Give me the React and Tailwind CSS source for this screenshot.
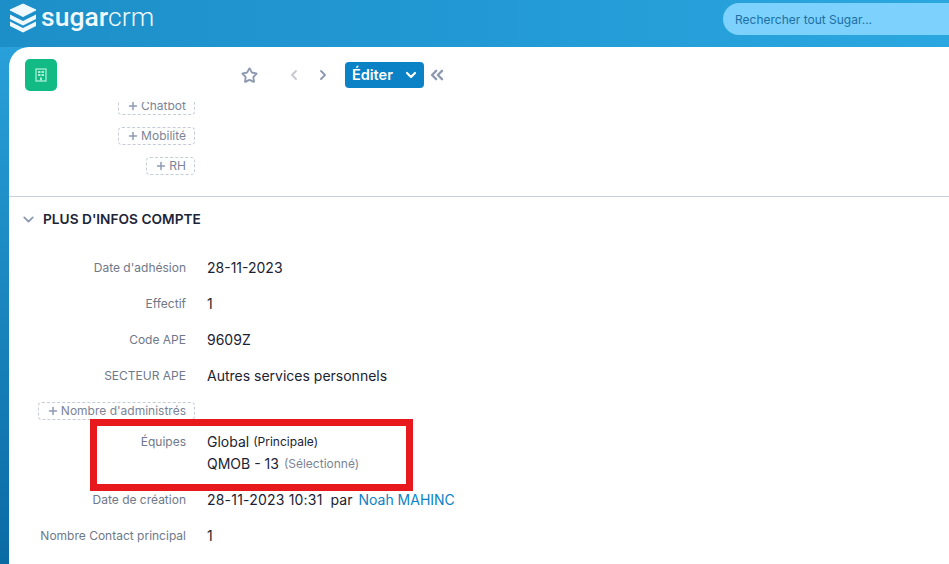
import React from "react";
import { Star, ChevronLeft, ChevronRight, ChevronDown, ChevronsLeft, Plus } from "lucide-react";

function Pill({ label, className = "" }) {
  return (
    <div className={`flex justify-end pr-[754px] ${className}`}>
      <span className="flex h-[18px] items-center gap-[2px] rounded-[4px] border border-dashed border-[#c5ccd9] pl-[8px] pr-[8px] text-[12px] leading-none text-[#7b8496]">
        <Plus size={12} strokeWidth={3} className="text-[#8f9bb3]" />
        {label}
      </span>
    </div>
  );
}

function Row({ label, children, className = "" }) {
  return (
    <div className={`flex items-center ${className}`}>
      <div className="w-[177px] shrink-0 pt-px text-right text-[12px] text-[#6f7889]">{label}</div>
      <div className="ml-[21px] text-[14px] text-[#1b2233]">{children}</div>
    </div>
  );
}

export default function App() {
  return (
    <div className="relative flex h-[564px] w-[949px] flex-col overflow-hidden bg-gradient-to-b from-[#2ba5de] to-[#0a6ba3] font-['Inter',sans-serif]">
      <header className="flex h-[47px] shrink-0 items-start justify-between bg-gradient-to-r from-[#1d8fc8] via-[#2299d4] to-[#2ba7e0]">
        <div className="ml-[9px] mt-[4px] flex items-center">
          <svg width="28" height="30" viewBox="0 0 28 30" fill="none" className="mt-[-1px]">
            <path d="M14 1 L27 7 L14 13.5 L1 7 Z" fill="#f0f9fd" stroke="#f0f9fd" strokeLinejoin="round" />
            <path d="M1 11.5 L14 18 L27 11.5 V16 L14 22.5 L1 16 Z" fill="#f0f9fd" />
            <path d="M1 18.5 L14 25 L27 18.5 V23 L14 29.5 L1 23 Z" fill="#f0f9fd" />
          </svg>
          <span className="ml-[4px] mt-[-3px] font-['Roboto',sans-serif] text-[26.5px] leading-none text-[#f0f9fd]">
            <span className="font-medium">sugar</span>
            <span className="font-light">crm</span>
          </span>
        </div>
        <div className="mt-[3px] flex h-[32px] w-[226px] items-center rounded-l-[16px] bg-[#7dd1fd] pl-[12px] pt-px text-[12px] text-[#1b6fa3]">
          Rechercher tout Sugar...
        </div>
      </header>

      <main className="ml-[9px] flex min-h-0 flex-1 flex-col rounded-tl-[20px] bg-white">
        <div className="flex h-[55px] shrink-0 items-center">
          <div className="ml-[16px] mt-px flex h-[32px] w-[32px] items-center justify-center rounded-[5px] bg-[#12bb84]">
            <svg width="12" height="14" viewBox="0 0 12 14" fill="none">
              <rect x="1" y="1" width="10" height="12" fill="#12bb84" stroke="#a8efd5" strokeWidth="1.3" />
              <rect x="3" y="3" width="2.5" height="2" fill="#a8efd5" />
              <rect x="6.5" y="3" width="2.5" height="2" fill="#a8efd5" />
              <rect x="3" y="6" width="2.5" height="2" fill="#a8efd5" />
              <rect x="6.5" y="6" width="2.5" height="2" fill="#a8efd5" />
              <rect x="5" y="9.5" width="2" height="3" fill="#a8efd5" />
            </svg>
          </div>
          <Star size={17} strokeWidth={2.6} className="ml-[184px] mt-px text-[#8d99b0]" />
          <ChevronLeft size={16} strokeWidth={2.8} className="ml-[28px] mt-px text-[#c6c9cf]" />
          <ChevronRight size={16} strokeWidth={2.8} className="ml-[13px] mt-px text-[#8d99b0]" />
          <div className="ml-[14px] mt-px flex h-[26px] w-[79px] items-center rounded-[4px] bg-[#0b82c5] pl-[7px] text-[14.5px] font-semibold text-white">
            Éditer
            <ChevronDown size={16} strokeWidth={3.2} className="ml-[10px]" />
          </div>
          <ChevronsLeft size={20} strokeWidth={2.8} className="ml-[3px] mt-px text-[#8d99b0]" />
        </div>

        <div className="relative min-h-0 flex-1 overflow-hidden">
          <Pill label="Chatbot" className="mt-[-5px]" />
          <Pill label="Mobilité" className="mt-[12px]" />
          <Pill label="RH" className="mt-[12px]" />

          <div className="mt-[21px] border-t border-[#c8d2de]" />

          <div className="mt-[12px] flex h-[20px] items-center pl-[11px]">
            <ChevronDown size={17} strokeWidth={2.6} className="text-[#8d99b0]" />
            <span className="ml-[6px] text-[13.7px] font-semibold text-[#1c2438]">PLUS D'INFOS COMPTE</span>
          </div>

          <Row label="Date d'adhésion" className="mt-[28px] h-[20px]">28-11-2023</Row>
          <Row label="Effectif" className="mt-[16px] h-[20px]">1</Row>
          <Row label="Code APE" className="mt-[16px] h-[20px]">9609Z</Row>
          <Row label="SECTEUR APE" className="mt-[16px] h-[20px]">Autres services personnels</Row>

          <Pill label="Nombre d'administrés" className="mt-[17px]" />

          <div className="mt-[11px] flex h-[20px] items-center">
            <div className="w-[177px] shrink-0 pt-px text-right text-[12px] text-[#6f7889]">Équipes</div>
            <div className="ml-[21px] flex items-center text-[14px] text-[#1b2233]">
              Global<span className="ml-[4px] mt-px text-[12px]">(Principale)</span>
            </div>
          </div>
          <div className="mt-[2px] flex h-[21px] items-center">
            <div className="ml-[198px] flex items-center text-[14px] text-[#1b2233]">
              QMOB - 13<span className="ml-[5px] mt-px text-[12px] text-[#7b8496]">(Sélectionné)</span>
            </div>
          </div>

          <Row label="Date de création" className="mt-[15px] h-[20px]">
            <span className="tracking-[0.2px]">28-11-2023 10:31</span>
            <span className="ml-[8px]">par</span>
            <span className="ml-[6px] text-[#0b82c5]">Noah MAHINC</span>
          </Row>
          <Row label="Nombre Contact principal" className="mt-[16px] h-[20px]">1</Row>

          <div className="absolute left-[81px] top-[317px] h-[72px] w-[323px] border-[7px] border-[#e8191c]" />
        </div>
      </main>
    </div>
  );
}
